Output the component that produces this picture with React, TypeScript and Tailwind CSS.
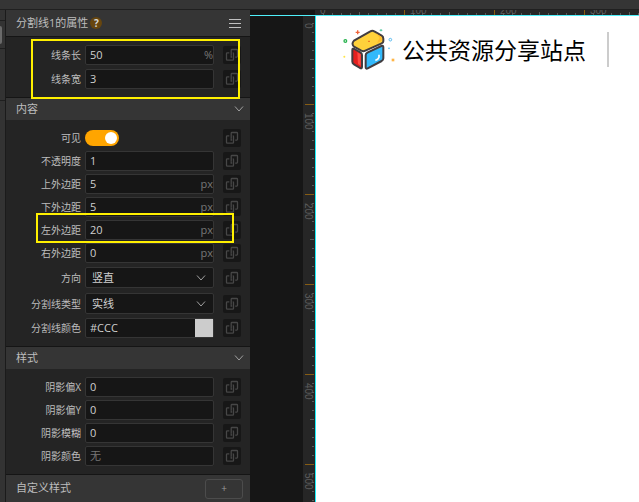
import { useEffect, useId, useState, type ReactNode } from "react";

const sans = "font-['Open_Sans','Noto_Sans_CJK_SC',sans-serif]";

function BindIcon() {
  return (
    <svg viewBox="0 0 18 18" className="size-[18px]" fill="none" stroke="#474747" strokeWidth="1.3" aria-hidden="true">
      <path d="M8.2 9.8V4.3q0-.8.8-.8h4.7q.8 0 .8.8v6q0 .8-.8.8h-1.5" />
      <path d="M6.3 6.8H4.3q-.8 0-.8.8v5.8q0 .8.8.8h5.4q.8 0 .8-.8V7.6q0-.8-.8-.8M8.2 9.8v1.3h1" />
    </svg>
  );
}

function Chevron({ className }: { className: string }) {
  return (
    <svg viewBox="0 0 10 8" className={className} fill="none" stroke="#a0a0a0" strokeWidth="1" aria-hidden="true">
      <path d="M1 1.5 5 6 9 1.5" />
    </svg>
  );
}

function Row({ label, id, tall = false, children }: { label: string; id: string; tall?: boolean; children: ReactNode }) {
  return (
    <div className={`flex items-center ${tall ? "h-[23px]" : "h-5"}`}>
      <label htmlFor={id} className="w-[75px] shrink-0 whitespace-nowrap text-right text-[10px] leading-5 text-[#bdbdbd]">
        {label}
      </label>
      <div className="ml-1 w-[129px] shrink-0">{children}</div>
      <button
        type="button"
        aria-label={`绑定${label}`}
        className="ml-[9px] flex size-[18px] shrink-0 items-center justify-center rounded-[2px] bg-[#171717]"
      >
        <BindIcon />
      </button>
    </div>
  );
}

function TextRow({ label, value, unit, placeholder }: { label: string; value?: string; unit?: string; placeholder?: string }) {
  const id = useId();
  return (
    <Row label={label} id={id}>
      <div className="flex h-5 items-center rounded-[2px] border border-[#353535] bg-[#161616]">
        <input
          id={id}
          type="text"
          defaultValue={value}
          placeholder={placeholder}
          className="h-full min-w-0 flex-1 bg-transparent pb-0.5 pl-1 text-[11px] text-[#cfcfcf] outline-none placeholder:text-[#777]"
        />
        {unit && <span className="text-[11px] leading-4 text-[#777]">{unit}</span>}
      </div>
    </Row>
  );
}

function SelectRow({ label, options }: { label: string; options: string[] }) {
  const id = useId();
  return (
    <Row label={label} id={id} tall>
      <div className="relative">
        <select
          id={id}
          className="block h-[21px] w-full appearance-none rounded-[2px] border border-[#353535] bg-[#161616] pt-0.5 pl-1.5 text-[11px] text-[#cfcfcf] outline-none"
        >
          {options.map((o) => (
            <option key={o}>{o}</option>
          ))}
        </select>
        <Chevron className="pointer-events-none absolute top-[7px] right-2 h-2 w-2.5" />
      </div>
    </Row>
  );
}

function ColorRow() {
  const id = useId();
  return (
    <Row label="分割线颜色" id={id}>
      <div className="flex h-5 items-center rounded-[2px] border border-[#353535] bg-[#161616]">
        <input
          id={id}
          type="text"
          defaultValue="#CCC"
          className="h-full min-w-0 flex-1 bg-transparent pb-0.5 pl-1 text-[11px] text-[#cfcfcf] outline-none"
        />
        <input
          type="color"
          aria-label="选择颜色"
          defaultValue="#cccccc"
          className="h-[18px] w-[18px] appearance-none rounded-none border-0 p-0 [&::-webkit-color-swatch-wrapper]:p-0 [&::-webkit-color-swatch]:rounded-none [&::-webkit-color-swatch]:border-0"
        />
      </div>
    </Row>
  );
}

function ToggleRow() {
  const id = useId();
  return (
    <Row label="可见" id={id}>
      <input
        id={id}
        type="checkbox"
        defaultChecked
        className="block h-4 w-[34px] appearance-none rounded-full bg-[#555] p-0.5 before:block before:size-3 before:rounded-full before:bg-white checked:bg-[#ffa500] checked:pl-5"
      />
    </Row>
  );
}

function SectionHeader({ title }: { title: string }) {
  return (
    <button
      type="button"
      className="flex h-[23px] w-full items-center justify-between border-t border-[#151515] bg-[#353535] pr-1.5 pl-2.5 text-[11px] text-[#bdbdbd]"
    >
      {title}
      <Chevron className="h-2 w-2.5" />
    </button>
  );
}

const tenths = [1, 2, 3, 4, 5, 6, 7, 8, 9];

function useHundreds() {
  const [size, setSize] = useState({ width: window.innerWidth, height: window.innerHeight });
  useEffect(() => {
    const update = () => setSize({ width: window.innerWidth, height: window.innerHeight });
    window.addEventListener("resize", update);
    return () => window.removeEventListener("resize", update);
  }, []);
  return {
    across: Array.from({ length: Math.ceil((size.width - 315) / 90) }, (_, n) => n),
    down: Array.from({ length: Math.ceil((size.height - 16) / 90) }, (_, n) => n),
  };
}

function VerticalRuler({ marks }: { marks: number[] }) {
  return (
    <svg className="h-full w-3 bg-[#262626]" aria-label="垂直标尺">
      {marks.map((n) => {
        const y = n * 90 - 2;
        return (
          <g key={n}>
            <rect x="2" y={y} width="9" height="1" fill="#855c14" />
            {tenths.map((t) => (
              <rect key={t} x={t === 5 ? 7 : 9} y={y + t * 9} width={t === 5 ? 4 : 2} height="1" fill="#5a5a5a" />
            ))}
            <text
              transform={`translate(2 ${y + 9}) rotate(90)`}
              className="fill-[#5c5c5c] font-['Liberation_Sans',sans-serif] text-[10px]"
            >
              {n * 100}
            </text>
          </g>
        );
      })}
    </svg>
  );
}

function HorizontalRuler({ marks }: { marks: number[] }) {
  return (
    <svg className="block h-[5px] w-full bg-[#262626]" aria-label="水平标尺">
      {marks.map((n) => {
        const x = n * 90 - 1;
        return (
          <g key={n}>
            <rect x={x} y="0" width="1" height="5" fill="#855c14" />
            {tenths.map((t) => (
              <rect key={t} x={x + t * 9} y={t === 5 ? 2 : 3} width="1" height="3" fill="#5a5a5a" />
            ))}
            <text x={x + 6} y="4" className="fill-[#5c5c5c] font-['Liberation_Sans',sans-serif] text-[10px]">
              {n * 100}
            </text>
          </g>
        );
      })}
    </svg>
  );
}

function Logo() {
  return (
    <svg viewBox="0 0 192 162" className="h-[54px] w-16 shrink-0" aria-label="logo">
      <g stroke="#423d40" strokeWidth="6" strokeLinejoin="round">
        <path d="M48 56 97 28q6-4 12 0l22 13q5 3 5 9v8q0 4-5 6L82 86q-6 3-12 0L48 74q-9-8 0-18Z" fill="#ffd13b" />
        <path d="M43 84q0-6 6-3l18 10q5 3 5 8v36q0 6-6 3l-18-11q-5-3-5-8Z" fill="#e5201f" />
        <path d="M83 100q0-5 5-8l42-20q6-3 6 4v33q0 5-5 8l-42 22q-6 3-6-4Z" fill="#32b9fb" />
      </g>
      <path d="M112 33 131 45v11l-14 7 8-16Z" fill="#ffb92b" />
      <path d="M58 91 68 97v34l-8-5Z" fill="#ff4b43" />
      <path d="M123 98v8q-2 7-11 9" fill="none" stroke="#fff" strokeWidth="5" />
      <path d="M90 58h6" stroke="#ee6b1f" strokeWidth="3" />
      <path d="M59 25v12M53 31h12" stroke="#f0643a" strokeWidth="4" />
      <path d="M129 21v7M125 25h8" stroke="#54c8a0" strokeWidth="3" />
      <circle cx="22" cy="57" r="4" fill="none" stroke="#28b34f" strokeWidth="4" />
      <circle cx="157" cy="53" r="4" fill="none" stroke="#58baf0" strokeWidth="3" />
      <circle cx="153" cy="79" r="2.5" fill="#45b9f2" />
      <circle cx="19" cy="104" r="3" fill="#ffe445" />
      <rect x="161" y="110" width="8" height="8" fill="#ffb545" />
    </svg>
  );
}

export default function App() {
  const { across, down } = useHundreds();
  return (
    <div className={`relative flex h-screen flex-col overflow-hidden bg-[#161616] ${sans}`}>
      <header className="h-2.5 shrink-0 border-b border-[#202020] bg-[#353535]" />
      <div className="flex min-h-0 flex-1">
        <nav className="w-1.5 shrink-0 border-r border-[#1b1b1b] bg-[#333]">
          <div className="h-[11px] border-b border-[#1f1f1f]" />
          <div className="h-7 border-b border-[#1f1f1f] pt-[5px]">
            <div className="h-[18px] w-0.5 rounded-r-[2px] bg-[#6a6a6a]" />
          </div>
          <div className="h-[52px] border-b border-[#1f1f1f]" />
        </nav>

        <aside className="w-[244px] shrink-0 bg-[#242424]">
          <div className="flex h-[27px] items-center border-b border-[#151515] bg-[#353535] pr-[9px] pl-2.5">
            <h1 className="text-[11px] text-[#bdbdbd]">分割线1的属性</h1>
            <button
              type="button"
              aria-label="帮助"
              className="ml-0.5 flex size-3 items-center justify-center rounded-full bg-[#67460f] text-[10px] leading-none font-bold text-[#d8d8d8]"
            >
              ?
            </button>
            <button type="button" aria-label="菜单" className="ml-auto flex flex-col gap-[3px]">
              <span className="h-px w-3 bg-[#c0c0c0]" />
              <span className="h-px w-3 bg-[#c0c0c0]" />
              <span className="h-px w-3 bg-[#c0c0c0]" />
            </button>
          </div>

          <div className="flex flex-col gap-1 py-2">
            <TextRow label="线条长" value="50" unit="%" />
            <TextRow label="线条宽" value="3" />
          </div>

          <SectionHeader title="内容" />
          <div className="flex flex-col gap-[3px] py-2">
            <ToggleRow />
            <TextRow label="不透明度" value="1" />
            <TextRow label="上外边距" value="5" unit="px" />
            <TextRow label="下外边距" value="5" unit="px" />
            <TextRow label="左外边距" value="20" unit="px" />
            <TextRow label="右外边距" value="0" unit="px" />
            <SelectRow label="方向" options={["竖直", "水平"]} />
            <SelectRow label="分割线类型" options={["实线", "虚线"]} />
            <ColorRow />
          </div>

          <SectionHeader title="样式" />
          <div className="flex flex-col gap-[3px] py-2">
            <TextRow label="阴影偏X" value="0" />
            <TextRow label="阴影偏Y" value="0" />
            <TextRow label="阴影模糊" value="0" />
            <TextRow label="阴影颜色" placeholder="无" />
          </div>

          <div className="flex h-7 items-center justify-between border-t border-[#151515] bg-[#353535] pr-[7px] pl-2.5 text-[11px] text-[#bdbdbd]">
            自定义样式
            <button
              type="button"
              aria-label="添加自定义样式"
              className="flex h-5 w-[38px] items-center justify-center rounded-[3px] border border-[#4c4c4c] text-[10px] text-[#999]"
            >
              +
            </button>
          </div>
        </aside>

        <main className="flex min-w-0 flex-1 flex-col">
          <div className="border-b border-[#4ff0fa]">
            <div className="pl-[65px]">
              <HorizontalRuler marks={across} />
            </div>
          </div>
          <div className="flex min-h-0 flex-1 pl-[53px]">
            <VerticalRuler marks={down} />
            <div className="flex-1 border-l border-[#1df0fa] bg-white">
              <div className="flex items-center pt-1.5 pl-[22px]">
                <Logo />
                <p className="pt-0.5 text-[23px] leading-9 whitespace-nowrap text-black">公共资源分享站点</p>
                <div className="ml-[21px] h-[35px] w-0.5 bg-[#ccc]" />
              </div>
            </div>
          </div>
        </main>
      </div>

      <div className="pointer-events-none absolute top-[39px] left-[31px] h-[60px] w-[209px] border-2 border-[#fff000]" />
      <div className="pointer-events-none absolute top-[213px] left-9 h-[30px] w-[198px] border-2 border-[#fff000]" />
    </div>
  );
}
